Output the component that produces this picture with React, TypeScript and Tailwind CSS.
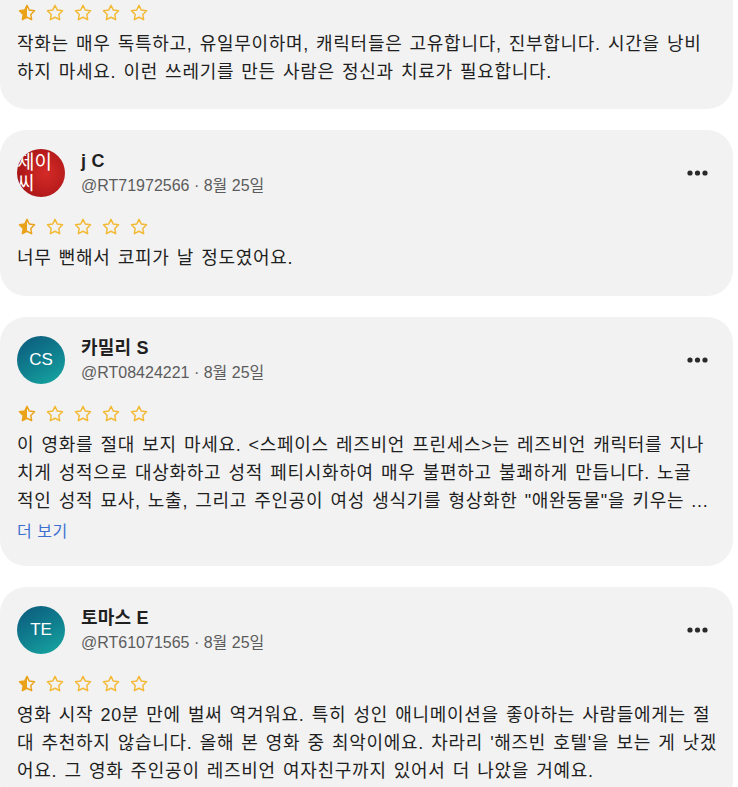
const STAR =
  "M12 2.8l2.8 5.68 6.27.91-4.53 4.42 1.07 6.24L12 17.1l-5.6 2.95 1.07-6.24-4.53-4.42 6.27-.91z";

interface Review {
  name?: string;
  handle?: string;
  avatar?: "red" | "teal";
  initials?: string;
  text: string;
  more?: boolean;
}

// line breaks follow the original feed's wrapping
const reviews: Review[] = [
  {
    text: "작화는 매우 독특하고, 유일무이하며, 캐릭터들은 고유합니다, 진부합니다. 시간을 낭비\n하지 마세요. 이런 쓰레기를 만든 사람은 정신과 치료가 필요합니다.",
  },
  {
    name: "j C",
    handle: "@RT71972566",
    avatar: "red",
    initials: "제이씨",
    text: "너무 뻔해서 코피가 날 정도였어요.",
  },
  {
    name: "카밀리 S",
    handle: "@RT08424221",
    avatar: "teal",
    initials: "CS",
    more: true,
    text: "이 영화를 절대 보지 마세요. <스페이스 레즈비언 프린세스>는 레즈비언 캐릭터를 지나\n치게 성적으로 대상화하고 성적 페티시화하여 매우 불편하고 불쾌하게 만듭니다. 노골\n적인 성적 묘사, 노출, 그리고 주인공이 여성 생식기를 형상화한 \"애완동물\"을 키우는 ...",
  },
  {
    name: "토마스 E",
    handle: "@RT61071565",
    avatar: "teal",
    initials: "TE",
    text: "영화 시작 20분 만에 벌써 역겨워요. 특히 성인 애니메이션을 좋아하는 사람들에게는 절\n대 추천하지 않습니다. 올해 본 영화 중 최악이에요. 차라리 '해즈빈 호텔'을 보는 게 낫겠\n어요. 그 영화 주인공이 레즈비언 여자친구까지 있어서 더 나았을 거예요.",
  },
];

const Star = ({ half, clipId }: { half?: boolean; clipId: string }) => (
  <svg width="20" height="20" viewBox="0 0 24 24">
    {half && (
      <>
        <defs>
          <clipPath id={clipId}>
            <rect x="0" y="0" width="12" height="24" />
          </clipPath>
        </defs>
        <path d={STAR} fill="#eaa21a" clipPath={`url(#${clipId})`} />
      </>
    )}
    <path
      d={STAR}
      fill="none"
      stroke={half ? "#eaa21a" : "#f3b935"}
      strokeWidth="1.7"
      strokeLinejoin="round"
    />
  </svg>
);

const Stars = ({ idx }: { idx: number }) => (
  <div className="flex h-[24px] items-center gap-[8px]">
    {[0, 1, 2, 3, 4].map((i) => (
      <Star key={i} half={i === 0} clipId={`half-star-${idx}`} />
    ))}
  </div>
);

const Avatar = ({ kind, initials }: { kind: "red" | "teal"; initials: string }) => {
  if (kind === "red") {
    return (
      <div className="h-[48px] w-[48px] shrink-0 overflow-hidden rounded-full bg-[radial-gradient(circle_at_60%_50%,#d42b27_0%,#b81c1c_55%,#920e0e_100%)] pt-[3px] text-left text-[19px] leading-[21px] text-white">
        <div>{initials.slice(0, 2)}</div>
        <div>{initials.slice(2)}</div>
      </div>
    );
  }
  return (
    <div className="flex h-[48px] w-[48px] shrink-0 items-center justify-center rounded-full bg-[linear-gradient(150deg,#0c587c_0%,#108290_55%,#17aaa3_100%)] text-[17px] text-white">
      {initials}
    </div>
  );
};

const Dots = () => (
  <svg width="21" height="6" viewBox="0 0 21 6" className="mr-[13px] ml-auto">
    <circle cx="3" cy="3" r="2.6" fill="#2a2a2a" />
    <circle cx="10.5" cy="3" r="2.6" fill="#2a2a2a" />
    <circle cx="18" cy="3" r="2.6" fill="#2a2a2a" />
  </svg>
);

const ReviewCard = ({ review, idx }: { review: Review; idx: number }) => {
  const cut = !review.name;

  return (
    <div
      className={`w-[733px] bg-[#f2f2f2] pr-[12px] pl-[17px] ${
        cut ? "rounded-b-[26px] pt-[1px] pb-[23px]" : "rounded-[26px] pt-[19px] pb-[24px]"
      }`}
    >
      {!cut && (
        <div className="mb-[18px] flex h-[48px] items-center">
          <Avatar kind={review.avatar!} initials={review.initials!} />
          <div className="ml-[16px] flex flex-col self-start">
            <div className="text-[18px] leading-[24px] font-bold tracking-[0.2px] text-[#1f1f1f]">
              {review.name}
            </div>
            <div className="text-[16px] leading-[26px] text-[#5c5c5c]">
              {review.handle} · 8월 25일
            </div>
          </div>
          <Dots />
        </div>
      )}
      <Stars idx={idx} />
      <p className="mt-[5px] text-[18px] leading-[28px] tracking-[0.7px] whitespace-pre-line text-[#1f1f1f] [word-spacing:1.5px]">
        {review.text}
      </p>
      {review.more && (
        <div className="mt-[7px] text-[16px] leading-[20px] tracking-[0.5px] text-[#3d6fd1]">
          더 보기
        </div>
      )}
    </div>
  );
};

export default function App() {
  return (
    <div className="min-h-[787px] w-[738px] overflow-hidden bg-white font-['Liberation_Sans','Noto_Sans_CJK_KR',sans-serif]">
      <div className="flex flex-col gap-[21px]">
        {reviews.map((r, i) => (
          <ReviewCard key={i} review={r} idx={i} />
        ))}
      </div>
    </div>
  );
}
